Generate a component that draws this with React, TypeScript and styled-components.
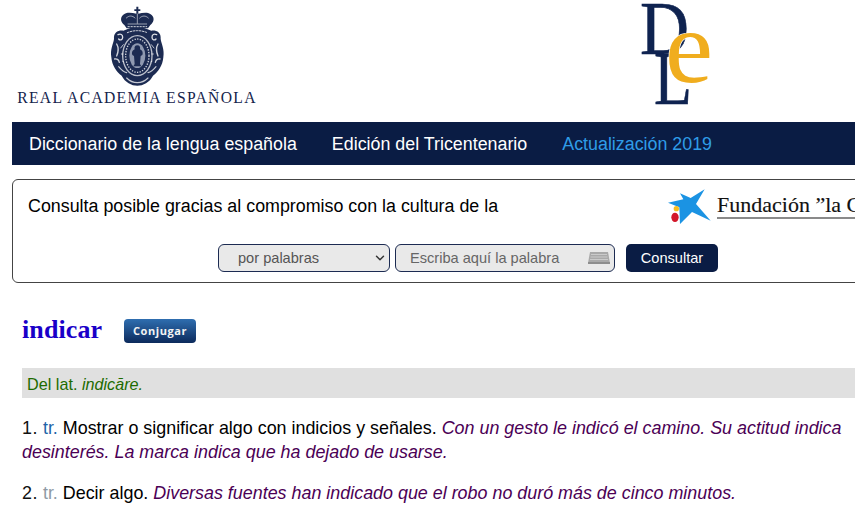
import React from "react";
import styled, { createGlobalStyle } from "styled-components";
import { ChevronDown } from "lucide-react";

const Global = createGlobalStyle`
  html, body { margin: 0; padding: 0; background: #fff; overflow: hidden; }
  body { font-family: "Liberation Sans", Arial, sans-serif; color: #000; }
`;
const Viewport = styled.div`width: 855px; height: 512px; overflow: hidden;`;
const Page = styled.div`width: 912px; padding-left: 12px; box-sizing: content-box;`;
const Header = styled.header`display: flex; height: 122px; box-sizing: border-box; padding: 4px 0 0 6px;`;
const Academy = styled.div`width: 238px; display: flex; flex-direction: column; align-items: center;`;
const CrestSvg = styled.svg`margin-left: 3px;`;
const AcademyName = styled.div`
  font-family: "Liberation Serif", serif; font-size: 15.65px; line-height: 18px; letter-spacing: 1.3px;
  color: #14244c; white-space: nowrap; margin-top: 1px;
`;
const DleWrap = styled.div`margin: -1px 0 0 384px;`;
const Nav = styled.nav`display: flex; gap: 35px; height: 43px; box-sizing: border-box; padding: 1px 0 0 17px; align-items: center; background: #0a1c44;`;
const NavLink = styled.a<{ $active?: boolean }>`
  font-size: 17.85px; color: ${p => (p.$active ? "#2f9ce8" : "#fff")}; white-space: nowrap;
`;
const SearchBox = styled.section`
  margin-top: 14px; height: 104px; box-sizing: border-box; border: 1px solid #444; border-radius: 6px;
`;
const SponsorRow = styled.div`display: flex; align-items: flex-start; height: 64px; padding: 10px 0 0 15px; box-sizing: border-box;`;
const SponsorText = styled.p`margin: 7px 0 0; width: 636px; font-size: 17.85px; line-height: 18px; white-space: nowrap;`;
const Foundation = styled.div`display: flex; align-items: flex-start; gap: 3px;`;
const StarSvg = styled.svg`margin-top: -4px;`;
const FoundationName = styled.div`
  font-family: "Liberation Serif", serif; font-size: 22px; line-height: 25px; white-space: nowrap; color: #111;
  -webkit-text-stroke: 0.15px #111; border-bottom: 2px solid #8a8a8a; margin-top: 2px;
`;
const SearchForm = styled.form`display: flex; justify-content: center; margin: 0;`;
const SelectWrap = styled.div`position: relative; width: 172px; height: 28px;`;
const fieldCss = `
  width: 100%; height: 100%; box-sizing: border-box; background: #e9e9e9; border: 1px solid #1c2b52; border-radius: 6px;
  font: 14.6px "Liberation Sans", Arial, sans-serif; color: #555; outline: none;
`;
const Select = styled.select`${fieldCss} appearance: none; padding-left: 19px;`;
const Chevron = styled(ChevronDown)`position: absolute; right: 3px; top: 7px; color: #333; pointer-events: none;`;
const InputWrap = styled.div`position: relative; width: 220px; height: 28px; margin-left: 5px;`;
const Input = styled.input`${fieldCss} padding-left: 14px; &::placeholder { color: #666; opacity: 1; }`;
const KeyboardWrap = styled.svg`position: absolute; right: 5px; top: 8px;`;
const Submit = styled.button`
  width: 92px; height: 28px; margin-left: 11px; background: #0a1c44; color: #fff; border: 0; border-radius: 5px;
  font: 14.6px "Liberation Sans", Arial, sans-serif; padding: 0;
`;
const Article = styled.article`padding-left: 10px;`;
const TitleRow = styled.div`display: flex; align-items: center; margin-top: 34px; height: 26px;`;
const Title = styled.h1`
  margin: 0; width: 102px; font: bold 26px/26px "Liberation Serif", serif; color: #1a00c8; letter-spacing: 0.1px;
`;
const Conjugate = styled.button`
  width: 72px; height: 24px; margin-top: 1px; padding: 0; border: 0; border-radius: 4px;
  background: linear-gradient(#2f6eb0, #0c2a5c); color: #f4f4f4;
  font: bold 11px "Open Sans", sans-serif; letter-spacing: 0.55px;
`;
const Etymology = styled.p`
  margin: 25px 0 0; height: 30px; line-height: 32px; background: #e0e0e0; padding-left: 5px;
  font-size: 16.2px; color: #1d6b00; white-space: nowrap;
`;
const Definition = styled.p`
  margin: 18px 0 0; width: 825px; font-size: 17.9px; line-height: 24px; color: #000;
  & + & { margin-top: 17px; }
`;
const Num = styled.span`color: #111; letter-spacing: 0.5px;`;
const Abbr = styled.abbr<{ $muted?: boolean }>`color: ${p => (p.$muted ? "#8e9aa4" : "#1f64a8")}; text-decoration: none;`;
const Example = styled.em`color: #4b0055;`;

const Crest = () => (
  <CrestSvg width="62" height="84" viewBox="0 0 186 252" aria-hidden="true">
    <g fill="#1c2b52">
      <path d="M85 8h6v8h6v5h-6v8c14-3 30-6 40 4 10 10 6 22-4 30l-7 10H56l-7-10c-10-8-14-20-4-30 10-10 26-7 40-4v-8h-6v-5h6z" />
      <path d="M88 68c17 0 30 7 42 12 15-2 30 5 28 25 2 15 12 30 8 55-2 25-16 45-31 55-10 20-30 30-47 30s-37-10-47-30c-15-10-29-30-31-55-4-25 6-40 8-55-2-20 13-27 28-25 12-5 25-12 42-12z" />
    </g>
    <g fill="none" stroke="#fff" strokeLinecap="round">
      <path d="M55 42c8-8 18-8 26 0M95 42c8-8 18-8 26 0M88 30v28M60 60h56" strokeWidth="3" opacity=".55" />
      <path d="M60 68h56" strokeWidth="3" strokeDasharray="4 5" opacity=".8" />
      <path d="M30 92c8-4 14 0 14 8s-8 10-12 5M146 92c-8-4-14 0-14 8s8 10 12 5" strokeWidth="4" opacity=".85" />
      <path d="M26 120c6 10 6 22 0 36M150 120c-6 10-6 22 0 36M20 165c6-2 12 2 14 10M156 165c-6-2-12 2-14 10" strokeWidth="4" opacity=".8" />
      <path d="M32 188c8 10 14 16 24 18M144 188c-8 10-14 16-24 18M56 222c10 10 20 14 32 14s22-4 32-14" strokeWidth="3.500" opacity=".75" />
      <path d="M58 86c10-4 20-6 30-6s20 2 30 6" strokeWidth="3" strokeDasharray="5 4" opacity=".8" />
      <path d="M38 132l8-10M138 132l-8-10M40 150h8M128 150h8M44 172l8 4M132 172l-8 4" strokeWidth="3" opacity=".7" />
    </g>
    <ellipse cx="88" cy="155" rx="46" ry="62" fill="#fff" opacity=".7" />
    <ellipse cx="88" cy="155" rx="42" ry="58" fill="#1c2b52" />
    <ellipse cx="88" cy="155" rx="35" ry="50" fill="none" stroke="#fff" strokeWidth="4" strokeDasharray="4 4" opacity=".8" />
    <ellipse cx="88" cy="155" rx="24" ry="37" fill="#8f99b0" />
    <path d="M88 124c7 0 10 6 8 12 7 3 10 10 7 17l-5 3-2 24 4 7H76l4-7-2-24-5-3c-3-7 0-14 7-17-2-6 1-12 8-12z" fill="#1c2b52" />
  </CrestSvg>
);

const DleLogo = () => (
  <svg width="96" height="116" viewBox="0 0 96 116" aria-hidden="true">
    <g fontFamily="'Liberation Serif', serif">
      <text x="0" y="51" fontSize="76" fill="#0f2350" stroke="#0f2350" strokeWidth=".6" textLength="49" lengthAdjust="spacingAndGlyphs">D</text>
      <text x="14" y="101" fontSize="77" fill="#0f2350" stroke="#0f2350" strokeWidth=".6" textLength="38" lengthAdjust="spacingAndGlyphs">L</text>
      <text x="25" y="79" fontSize="104" fill="#f0ad1e" stroke="#fff" strokeWidth="1.200" paintOrder="stroke" textLength="48" lengthAdjust="spacingAndGlyphs">e</text>
    </g>
  </svg>
);

const CaixaStar = () => (
  <StarSvg width="50" height="40" viewBox="0 0 150 120" aria-hidden="true">
    <path d="M12 50L58 40 48 22 80 36 122 10 96 54 140 104 84 78 48 114 46 64Z" fill="#1b93e3" />
    <circle cx="37" cy="68" r="8" fill="#f6bd22" />
    <ellipse cx="33" cy="94" rx="11" ry="14" fill="#d3172a" />
  </StarSvg>
);

const Keyboard = () => (
  <KeyboardWrap width="22" height="12" viewBox="0 0 22 12" aria-hidden="true">
    <path d="M2 0h18l2 11H0z" fill="#a9a9a9" />
    <path d="M3 2.500h16M2.500 5h17M2 7.500h18" stroke="#d4d4d4" strokeWidth=".8" />
    <rect x="0" y="10" width="22" height="2" fill="#8d8d8d" />
  </KeyboardWrap>
);

export default function App() {
  return (
    <Viewport>
      <Global />
      <Page>
        <Header>
          <Academy>
            <Crest />
            <AcademyName>REAL ACADEMIA ESPAÑOLA</AcademyName>
          </Academy>
          <DleWrap><DleLogo /></DleWrap>
        </Header>
        <Nav>
          <NavLink>Diccionario de la lengua española</NavLink>
          <NavLink>Edición del Tricentenario</NavLink>
          <NavLink $active>Actualización 2019</NavLink>
        </Nav>
        <SearchBox>
          <SponsorRow>
            <SponsorText>Consulta posible gracias al compromiso con la cultura de la</SponsorText>
            <Foundation>
              <CaixaStar />
              <FoundationName>Fundación ”la Caixa”</FoundationName>
            </Foundation>
          </SponsorRow>
          <SearchForm>
            <SelectWrap>
              <Select defaultValue="palabras">
                <option value="palabras">por palabras</option>
              </Select>
              <Chevron size={14} strokeWidth={2.5} />
            </SelectWrap>
            <InputWrap>
              <Input placeholder="Escriba aquí la palabra" />
              <Keyboard />
            </InputWrap>
            <Submit type="button">Consultar</Submit>
          </SearchForm>
        </SearchBox>
        <Article>
          <TitleRow>
            <Title>indicar</Title>
            <Conjugate type="button">Conjugar</Conjugate>
          </TitleRow>
          <Etymology>Del lat. <em>indicāre.</em></Etymology>
          <Definition>
            <Num>1.</Num> <Abbr>tr.</Abbr> Mostrar o significar algo con indicios y señales. <Example>Con un gesto le indicó el camino. Su actitud indica desinterés. La marca indica que ha dejado de usarse.</Example>
          </Definition>
          <Definition>
            <Num>2.</Num> <Abbr $muted>tr.</Abbr> Decir algo. <Example>Diversas fuentes han indicado que el robo no duró más de cinco minutos.</Example>
          </Definition>
        </Article>
      </Page>
    </Viewport>
  );
}
